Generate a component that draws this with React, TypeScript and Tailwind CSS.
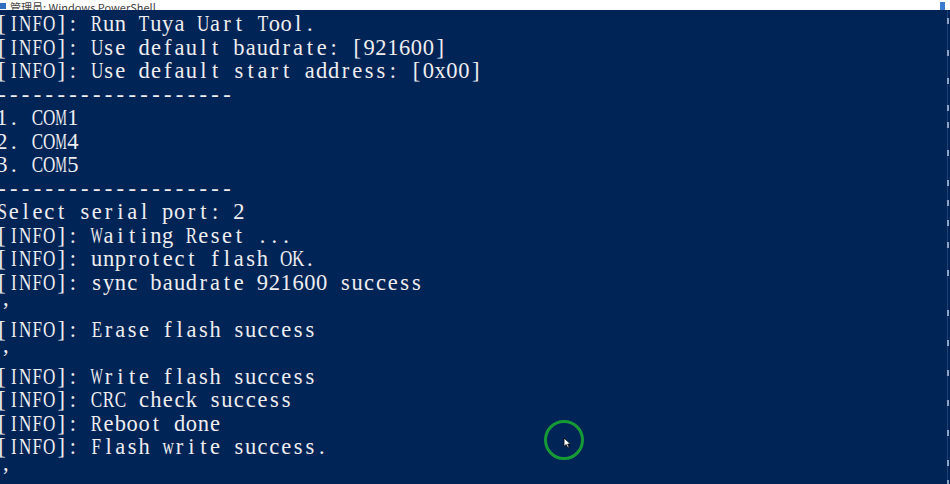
import React from 'react';

const lines: string[] = [
  '[INFO]: Run Tuya Uart Tool.',
  '[INFO]: Use default baudrate: [921600]',
  '[INFO]: Use default start address: [0x00]',
  '--------------------',
  '1. COM1',
  '2. COM4',
  '3. COM5',
  '--------------------',
  'Select serial port: 2',
  '[INFO]: Waiting Reset ...',
  '[INFO]: unprotect flash OK.',
  '[INFO]: sync baudrate 921600 success',
  ',',
  '[INFO]: Erase flash success',
  ',',
  '[INFO]: Write flash success',
  '[INFO]: CRC check success',
  '[INFO]: Reboot done',
  '[INFO]: Flash write success.',
  ',',
];

// light fragments of the window peeking in at the right edge
const edgeMarks = [8, 40, 68, 95, 112, 140, 170, 190, 210, 232, 260, 300, 330, 360, 390, 420, 450, 470];

// the console font draws latin as half-width cells; squeeze the wide serif glyphs to fit
const squeeze = (ch: string) => {
  if (ch === 'M' || ch === 'W') return 'inline-block scale-x-[0.58]';
  if (ch === 'm') return 'inline-block scale-x-[0.62]';
  if (ch === 'w') return 'inline-block scale-x-[0.7]';
  if (/[A-Z]/.test(ch)) return 'inline-block scale-x-[0.76]';
  return 'inline-block';
};

const TerminalLine: React.FC<{ text: string }> = ({ text }) => {
  if (text === ',') {
    return (
      <div className="h-[23.5px] leading-[23.5px] flex">
        <span className="inline-flex justify-center w-[11.85px] pl-[8px] -translate-y-[8px]">,</span>
      </div>
    );
  }
  return (
    <div className="h-[23.5px] leading-[23.5px] flex">
      {text.split('').map((ch, i) => (
        <span key={i} className="inline-flex justify-center w-[11.85px] shrink-0">
          <span className={squeeze(ch)}>{ch === ' ' ? '\u00a0' : ch}</span>
        </span>
      ))}
    </div>
  );
};

export default function App() {
  return (
    <div className="relative w-[950px] h-[484px] overflow-hidden flex flex-col bg-[#012456]">
      {/* window title bar, mostly scrolled off the top */}
      <div className="h-[10px] flex items-end bg-white overflow-hidden pr-[5px]">
        <div className="flex flex-1 items-end gap-[4px] h-full overflow-hidden">
          <div className="w-[6px] h-[6px] mb-[1px] bg-[#2f6fc0]" />
          <span
            className="text-[11px] leading-[6px] text-[#444] whitespace-nowrap"
            style={{ fontFamily: '"Noto Sans CJK SC", "Liberation Sans", sans-serif' }}
          >
            管理员: Windows PowerShell
          </span>
        </div>
        <div className="w-[5px] h-[8px] bg-[#3d7bd0]" />
      </div>

      <div className="flex flex-1 min-h-0">
        <div
          className="flex-1 -ml-[4px] pt-[2px] text-[22.5px] text-[#eeedf0]"
          style={{ fontFamily: '"Liberation Serif", "DejaVu Serif", serif' }}
        >
          {lines.map((l, i) => (
            <TerminalLine key={i} text={l} />
          ))}
        </div>
        <div className="relative w-[4px] bg-[#012456]">
          <div className="absolute left-[1px] top-0 bottom-0 w-[1px] bg-[#1d3f78]" />
          {edgeMarks.map((y) => (
            <div key={y} className="absolute left-[1px] w-[2px] h-[6px] bg-[#8da4c8]" style={{ top: y }} />
          ))}
        </div>
      </div>

      {/* click highlight + cursor */}
      <div className="absolute left-[544px] top-[420px] w-[40px] h-[40px] rounded-full border-[3.5px] border-[#159a36]" />
      <svg className="absolute left-[563px] top-[437px]" width="9" height="12" viewBox="0 0 9 12">
        <path d="M1 1 L1 9.5 L3.2 7.6 L4.8 11 L6.2 10.4 L4.7 7.1 L7.6 7.1 Z" fill="#fff" stroke="#000" strokeWidth="0.8" />
      </svg>
    </div>
  );
}
